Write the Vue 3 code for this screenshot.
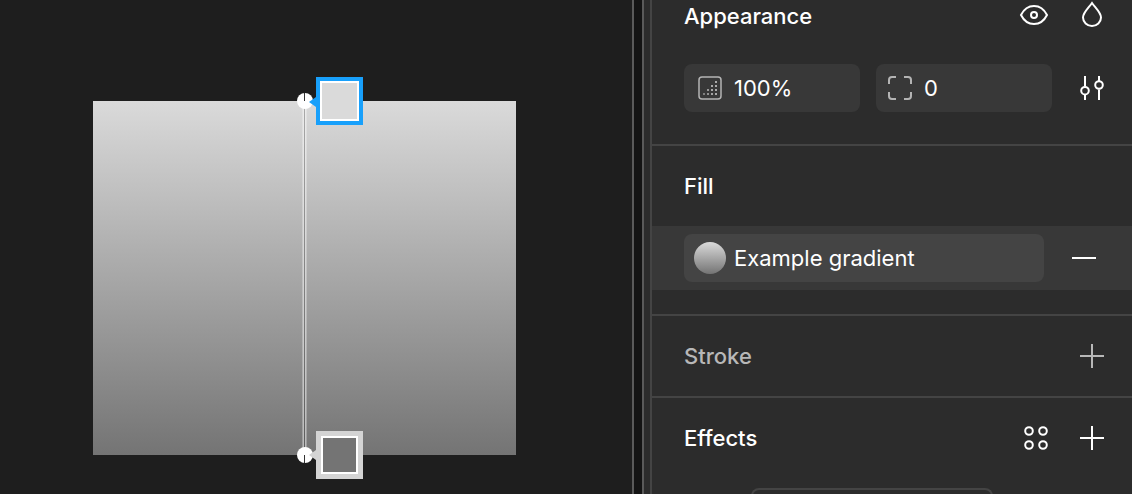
<script setup>
const rows = [
  [18, 6, 0.95], [14, 10, 0.95], [18, 10, 0.95], [10, 14, 0.8], [14, 14, 0.95], [18, 14, 0.95],
  [6, 18, 0.6], [10, 18, 0.75], [14, 18, 0.9], [18, 18, 0.95]
]
</script>

<template>
  <div class="app">
    <div class="canvas">
      <div class="shape"></div>
      <div class="track"></div>
      <div class="knob knob-top"></div>
      <div class="knob knob-bottom"></div>
      <div class="stop stop-top"><i class="swatch swatch-top"></i></div>
      <div class="stop stop-bottom"><i class="swatch swatch-bottom"></i></div>
      <div class="pointer pointer-top"></div>
      <div class="pointer pointer-bottom"></div>
    </div>
    <div class="rail-a"></div>
    <div class="rail-b"></div>
    <div class="panel">
      <section class="sec sec-appearance">
        <div class="head head-first">
          <span class="title">Appearance</span>
          <div class="head-icons">
            <svg class="ico" width="32" height="32" viewBox="0 0 32 32" fill="none" stroke="#fff" stroke-width="2">
              <path d="M3 15C6 9 11 6 16 6s10 3 13 9c-3 6-8 9-13 9S6 21 3 15Z" />
              <circle cx="16" cy="15" r="3" />
            </svg>
            <svg class="ico" width="32" height="32" viewBox="0 0 32 32" fill="none" stroke="#fff" stroke-width="2">
              <path d="M16 3C13 7.500 7 12.500 7 17.500a9 8.500 0 0 0 18 0C25 12.500 19 7.500 16 3Z" />
            </svg>
          </div>
        </div>
        <div class="fields">
          <div class="pill pill-small pill-opacity">
            <svg width="24" height="24" viewBox="0 0 24 24" fill="none">
              <rect x="1" y="1" width="22" height="22" rx="3" stroke="#b4b4b4" stroke-width="1.500" />
              <rect v-for="(d, i) in rows" :key="i" :x="d[0] - 1" :y="d[1] - 1" width="2" height="2" fill="#b0b0b0" :opacity="d[2]" />
            </svg>
            <span class="value">100%</span>
          </div>
          <div class="pill pill-small">
            <svg width="24" height="24" viewBox="0 0 24 24" fill="none" stroke="#b4b4b4" stroke-width="2">
              <path d="M1 8V4a3 3 0 0 1 3-3h4M16 1h4a3 3 0 0 1 3 3v4M23 16v4a3 3 0 0 1-3 3h-4M8 23H4a3 3 0 0 1-3-3v-4" />
            </svg>
            <span class="value">0</span>
          </div>
          <svg class="ico tune" width="32" height="32" viewBox="0 0 32 32" fill="none" stroke="#fff" stroke-width="2">
            <path d="M9 4v10.500M9 23v5M23 4v5M23 17.500V28" />
            <circle cx="9" cy="18.700" r="3.800" />
            <circle cx="23" cy="13" r="3.800" />
          </svg>
        </div>
      </section>
      <section class="sec sec-fill">
        <div class="head"><span class="title">Fill</span></div>
        <div class="band">
          <div class="pill pill-wide">
            <i class="ball"></i>
            <span class="value">Example gradient</span>
          </div>
          <i class="minus"></i>
        </div>
      </section>
      <section class="sec sec-stroke">
        <div class="head">
          <span class="title muted">Stroke</span>
          <svg class="ico" width="32" height="32" viewBox="0 0 32 32" stroke="#b8b8b8" stroke-width="2"><path d="M16 4v24M4 16h24" /></svg>
        </div>
      </section>
      <section class="sec sec-effects">
        <div class="head">
          <span class="title">Effects</span>
          <div class="head-icons head-icons-tight">
            <svg class="ico" width="32" height="32" viewBox="0 0 32 32" fill="none" stroke="#fff" stroke-width="2">
              <circle cx="9" cy="9" r="3.800" /><circle cx="23" cy="9" r="3.800" />
              <circle cx="9" cy="23" r="3.800" /><circle cx="23" cy="23" r="3.800" />
            </svg>
            <svg class="ico" width="32" height="32" viewBox="0 0 32 32" stroke="#fff" stroke-width="2"><path d="M16 4v24M4 16h24" /></svg>
          </div>
        </div>
        <div class="stub"></div>
      </section>
    </div>
  </div>
</template>

<style>
html, body { margin: 0; background: #1e1e1e; overflow: hidden; }
</style>

<style scoped>
.app {
  display: flex;
  width: 1132px;
  height: 494px;
  overflow: hidden;
  background: #1e1e1e;
  font-family: Inter, "Liberation Sans", sans-serif;
  color: #fff;
}
.canvas { position: relative; width: 632px; flex: none; background: #1e1e1e; }
.shape {
  position: absolute; left: 93px; top: 101px; width: 423px; height: 354px;
  background: linear-gradient(#dadada, #747474);
}
.track {
  position: absolute; left: 302px; top: 101px; width: 5px; height: 354px;
  background: linear-gradient(90deg,
    rgba(255, 255, 255, 0.28) 0 20%,
    rgba(255, 255, 255, 0.5) 20% 40%,
    rgba(0, 0, 0, 0.22) 40% 60%,
    rgba(255, 255, 255, 0.5) 60% 80%,
    rgba(255, 255, 255, 0.28) 80% 100%);
}
.knob {
  position: absolute; left: 296.700px; width: 16px; height: 16px; border-radius: 50%;
  background: #fff;
}
.knob-top {
  top: 92.700px;
  background:
    linear-gradient(#333, #333) 7.300px 0 / 1.400px 8.300px no-repeat,
    #fff;
}
.knob-bottom {
  top: 447px;
  background:
    linear-gradient(#333, #333) 7.300px 8px / 1.400px 8px no-repeat,
    #fff;
}
.stop { position: absolute; left: 315.700px; width: 47.600px; height: 48px; box-sizing: border-box; }
.stop-top { top: 77px; background: #18a0fb; padding: 4px; }
.stop-bottom { top: 431px; background: #d4d4d4; padding: 5px; }
.swatch { display: block; width: 100%; height: 100%; box-sizing: border-box; border: 2px solid #fff; }
.swatch-top { background: #dadada; }
.swatch-bottom { background: #747474; }
.pointer { position: absolute; left: 309px; width: 0; height: 0; border: 5px solid transparent; border-left: 0; border-right: 7px solid; }
.pointer-top { top: 96.500px; border-right-color: #18a0fb; }
.pointer-bottom { top: 450px; border-right-color: #d4d4d4; }
.rail-a { width: 10px; flex: none; border-left: 2px solid #5a5a5a; box-sizing: border-box; background: #141414; }
.rail-b { width: 8px; flex: none; border-left: 2px solid #5a5a5a; box-sizing: border-box; background: #2c2c2c; }
.panel {
  flex: 1; min-width: 0; background: #2c2c2c; border-left: 2px solid #444;
  display: flex; flex-direction: column;
}
.sec { flex: none; border-bottom: 2px solid #444; }
.sec-appearance { height: 144px; }
.sec-fill { height: 168px; }
.sec-stroke { height: 80px; }
.sec-effects { border-bottom: 0; flex: 1; }
.head {
  height: 80px; display: flex; align-items: center; justify-content: space-between;
  padding: 0 24px 0 32px;
}
.head-first { height: 32px; }
.head-icons { display: flex; gap: 26px; }
.head-icons-tight { gap: 24px; }
.ico { display: block; flex: none; }
.title { font-size: 22px; font-weight: 500; line-height: 32px; }
.muted { color: #b8b8b8; }
.fields {
  display: flex; align-items: center; gap: 16px; margin-top: 32px; padding-left: 32px;
}
.tune { margin-left: 8px; }
.pill {
  display: flex; align-items: center; height: 48px; border-radius: 8px; box-sizing: border-box;
  background: #383838;
}
.pill-small { width: 176px; padding-left: 12px; gap: 12px; }
.pill-opacity { padding-left: 14px; }
.pill-wide { width: 360px; padding-left: 10px; gap: 8px; background: #444; }
.value { font-size: 22px; line-height: 32px; font-weight: 400; }
.band { display: flex; align-items: center; height: 64px; background: #383838; padding-left: 32px; margin-bottom: 24px; }
.ball {
  display: block; width: 32px; height: 32px; border-radius: 50%;
  background: linear-gradient(#dadada, #747474);
}
.minus { display: block; width: 24px; height: 2px; background: #fff; margin-left: 28px; }
.stub {
  margin: 10px 0 0 99px; width: 242px; height: 12px; box-sizing: border-box;
  border: 2px solid #444; border-bottom: 0; border-radius: 8px 8px 0 0;
}
</style>
